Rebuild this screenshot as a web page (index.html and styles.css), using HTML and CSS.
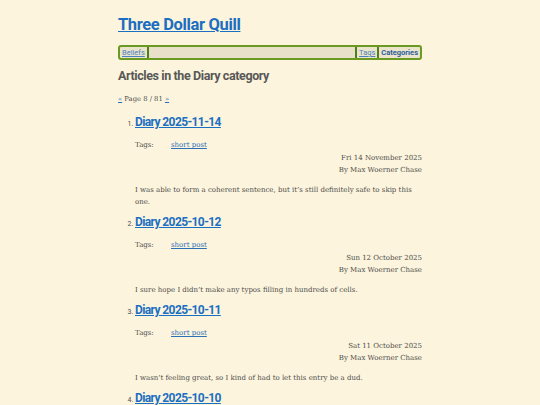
FILE: index.html
```html
<!DOCTYPE html>
<html>
<head>
<meta charset="utf-8">
<link rel="stylesheet" href="styles.css">
</head>
<body>
<div class="page">
  <header class="site-header">
    <h1 class="site-title"><a href="#">Three Dollar Quill</a></h1>
    <nav class="nav">
      <a class="nav-item" href="#">Beliefs</a>
      <span class="nav-fill"></span>
      <a class="nav-item" href="#">Tags</a>
      <a class="nav-item current" href="#">Categories</a>
    </nav>
  </header>
  <main>
    <h2 class="cat-title">Articles in the Diary category</h2>
    <p class="pager"><a href="#">«</a> Page 8 / 81 <a href="#">»</a></p>
    <ol class="articles" start="1">
      <li class="article">
        <h3 class="art-title"><a href="#">Diary 2025-11-14</a></h3>
        <div class="tags"><span class="tags-label">Tags:</span><a href="#">short post</a></div>
        <div class="meta">
          <div>Fri 14 November 2025</div>
          <div>By Max Woerner Chase</div>
        </div>
        <p class="summary">I was able to form a coherent sentence, but it’s still definitely safe to skip this one.</p>
      </li>
      <li class="article">
        <h3 class="art-title"><a href="#">Diary 2025-10-12</a></h3>
        <div class="tags"><span class="tags-label">Tags:</span><a href="#">short post</a></div>
        <div class="meta">
          <div>Sun 12 October 2025</div>
          <div>By Max Woerner Chase</div>
        </div>
        <p class="summary">I sure hope I didn’t make any typos filling in hundreds of cells.</p>
      </li>
      <li class="article">
        <h3 class="art-title"><a href="#">Diary 2025-10-11</a></h3>
        <div class="tags"><span class="tags-label">Tags:</span><a href="#">short post</a></div>
        <div class="meta">
          <div>Sat 11 October 2025</div>
          <div>By Max Woerner Chase</div>
        </div>
        <p class="summary">I wasn’t feeling great, so I kind of had to let this entry be a dud.</p>
      </li>
      <li class="article">
        <h3 class="art-title"><a href="#">Diary 2025-10-10</a></h3>
      </li>
    </ol>
  </main>
</div>
</body>
</html>
```
FILE: styles.css
```css
html, body {
  margin: 0;
  padding: 0;
  background: #fcf4dc;
}
body {
  font-family: "DejaVu Serif", serif;
  font-size: 7px;
  color: #4d4d4d;
  overflow: hidden;
  height: 405px;
}
a { color: #2a6fb8; }
.page {
  width: 304px;
  margin: 0 auto;
}
.site-title {
  font-family: Roboto, sans-serif;
  font-weight: 700;
  font-size: 16.5px;
  line-height: 20px;
  letter-spacing: -0.35px;
  margin: 0;
  padding-top: 15px;
}
.site-title a { color: #1b6fc2; }
.nav {
  margin-top: 10px;
  display: flex;
  align-items: stretch;
  border: 2px solid #6b9a22;
  border-radius: 3px;
  background: #ebe4cd;
  height: 11px;
  font-family: Roboto, sans-serif;
  font-size: 7.5px;
  line-height: 11px;
}
.nav-item {
  padding: 0 2px;
  color: #4a82bc;
}
.nav-item.current {
  font-weight: 700;
  text-decoration: none;
  color: #2a5f9a;
}
.nav-fill {
  flex: 1;
  border-left: 2px solid #4f7f18;
  border-right: 2px solid #4f7f18;
  background: #e8e0c8;
}
.nav-item + .nav-item { border-left: 2px solid #4f7f18; }
.cat-title {
  font-family: Roboto, sans-serif;
  font-weight: 700;
  font-size: 12.5px;
  line-height: 16px;
  letter-spacing: -0.4px;
  margin: 8px 0 0;
  color: #585858;
}
.pager {
  margin: 10px 0 0;
  font-size: 6.8px;
  line-height: 10px;
}
.articles {
  margin: 10px 0 0;
  padding-left: 17px;
}
.article::marker {
  font-family: Roboto, sans-serif;
  font-size: 7px;
}
.art-title {
  font-family: Roboto, sans-serif;
  font-weight: 700;
  font-size: 12px;
  line-height: 16px;
  letter-spacing: -0.6px;
  margin: 0;
}
.art-title a { color: #1b6fc2; }
.tags {
  margin-top: 9px;
  line-height: 12px;
}
.tags-label {
  display: inline-block;
  width: 36px;
}
.meta {
  margin-top: 1px;
  text-align: right;
  line-height: 12px;
}
.summary {
  margin: 8px 0 6px;
  line-height: 12px;
}
```
